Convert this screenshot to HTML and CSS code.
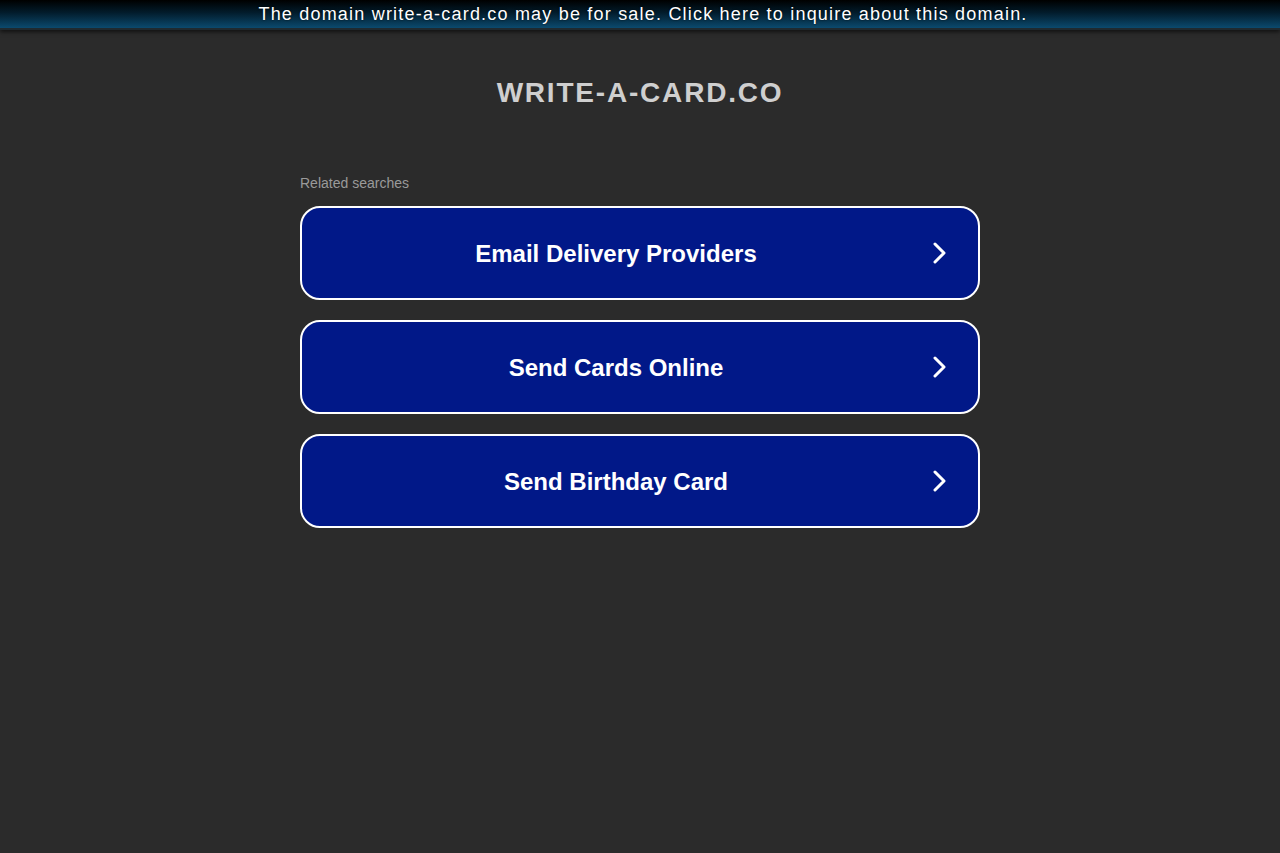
FILE: index.html
```html
<!DOCTYPE html>
<html>
<head>
<meta charset="utf-8">
<link rel="stylesheet" href="styles.css">
</head>
<body>
<div class="topbar">The domain write-a-card.co may be for sale. Click here to inquire about this domain.</div>
<h1 class="title">WRITE-A-CARD.CO</h1>
<div class="content">
  <div class="related">Related searches</div>
  <div class="list">
    <a class="item" href="#"><span class="label">Email Delivery Providers</span><svg class="chev" viewBox="0 0 16 22" width="16" height="22"><path d="M3 2 L12 11 L3 20" fill="none" stroke="#fff" stroke-width="3" stroke-linecap="round" stroke-linejoin="round"/></svg></a>
    <a class="item" href="#"><span class="label">Send Cards Online</span><svg class="chev" viewBox="0 0 16 22" width="16" height="22"><path d="M3 2 L12 11 L3 20" fill="none" stroke="#fff" stroke-width="3" stroke-linecap="round" stroke-linejoin="round"/></svg></a>
    <a class="item" href="#"><span class="label">Send Birthday Card</span><svg class="chev" viewBox="0 0 16 22" width="16" height="22"><path d="M3 2 L12 11 L3 20" fill="none" stroke="#fff" stroke-width="3" stroke-linecap="round" stroke-linejoin="round"/></svg></a>
  </div>
</div>
</body>
</html>
```

FILE: styles.css
```css
html, body {
  margin: 0;
  padding: 0;
  background: #2b2b2b;
  font-family: "Liberation Sans", Arial, sans-serif;
}
.topbar {
  height: 28px;
  line-height: 28px;
  padding-left: 6px;
  text-align: center;
  color: #fff;
  font-size: 18px;
  letter-spacing: 1.2px;
  background: linear-gradient(to bottom, #000000 0%, #021c2c 45%, #0b4a6e 100%);
  box-shadow: 0 2px 4px rgba(0,0,0,0.6);
  border-bottom: 2px solid #1f2a30;
  text-shadow: 0 0 2px rgba(0,0,0,0.8);
}
.title {
  margin: 45px 0 0;
  text-align: center;
  color: #cfcfcf;
  font-size: 28px;
  font-weight: bold;
  letter-spacing: 1.8px;
  line-height: 36px;
}
.content {
  width: 680px;
  margin: 62px auto 0;
}
.related {
  color: #9a9a9a;
  font-size: 14px;
  line-height: 20px;
  margin-bottom: 13px;
}
.list {
  display: flex;
  flex-direction: column;
  gap: 20px;
}
.item {
  display: flex;
  align-items: center;
  height: 90px;
  border: 2px solid #fff;
  border-radius: 20px;
  background: #011888;
  text-decoration: none;
  color: #fff;
}
.label {
  flex: 1;
  text-align: center;
  font-size: 24px;
  font-weight: bold;
  padding-top: 2px;
}
.chev {
  margin-right: 30px;
  margin-left: 2px;
}
```
